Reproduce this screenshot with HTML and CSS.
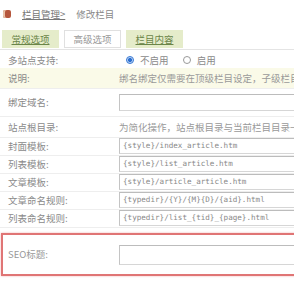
FILE: index.html
```html
<!DOCTYPE html>
<html lang="zh-CN">
<head>
  <meta charset="UTF-8" />
  <title>修改栏目</title>
  <link rel="stylesheet" href="styles.css">
</head>
<body>

  <!-- breadcrumb -->
  <div class="crumb">
    <span class="crumb-icon"></span>
    <a href="#">栏目管理&gt;</a>
    <span class="crumb-cur">修改栏目</span>
  </div>

  <!-- tabs -->
  <div class="tabs">
    <span class="tab">常规选项</span>
    <span class="tab active">高级选项</span>
    <span class="tab">栏目内容</span>
  </div>

  <table class="form">
    <colgroup>
      <col class="c-lbl">
      <col>
    </colgroup>
    <tr class="r-radio">
      <td class="lbl">多站点支持:</td>
      <td>
        <label class="radio"><span class="dot on"></span>不启用</label>
        <label class="radio"><span class="dot"></span>启用</label>
      </td>
    </tr>
    <tr class="r-note">
      <td class="lbl">说明:</td>
      <td class="note">绑名绑定仅需要在顶级栏目设定，子级栏目更改无效。</td>
    </tr>
    <tr class="r-domain">
      <td class="lbl">绑定域名:</td>
      <td><div class="inp"></div></td>
    </tr>
    <tr class="r-root">
      <td class="lbl">站点根目录:</td>
      <td class="note">为简化操作，站点根目录与当前栏目目录一致</td>
    </tr>
    <tr class="r-tpl">
      <td class="lbl">封面模板:</td>
      <td><div class="inp">{style}/index_article.htm</div></td>
    </tr>
    <tr class="r-tpl">
      <td class="lbl">列表模板:</td>
      <td><div class="inp">{style}/list_article.htm</div></td>
    </tr>
    <tr class="r-tpl">
      <td class="lbl">文章模板:</td>
      <td><div class="inp">{style}/article_article.htm</div></td>
    </tr>
    <tr class="r-tpl">
      <td class="lbl">文章命名规则:</td>
      <td><div class="inp">{typedir}/{Y}/{M}{D}/{aid}.html</div></td>
    </tr>
    <tr class="r-tpl">
      <td class="lbl">列表命名规则:</td>
      <td><div class="inp">{typedir}/list_{tid}_{page}.html</div></td>
    </tr>
  </table>

  <div class="seo">
    <span class="lbl">SEO标题:</span>
    <div class="inp"></div>
  </div>

</body>
</html>
```

FILE: styles.css
```css
* {
  box-sizing: border-box;
}

body {
  margin: 0;
  width: 294px;
  height: 294px;
  overflow: hidden;
  background: #fff;
  font-family: "Noto Sans CJK SC", "Liberation Serif", serif;
  font-size: 9.5px;
  color: #8a8a8a;
}

.crumb {
  height: 28px;
  display: flex;
  align-items: center;
  padding-left: 3px;
}

.crumb-icon {
  width: 8px;
  height: 8px;
  border-radius: 2px;
  background: #b5563c;
  box-shadow: inset 2px 0 0 #e8c2a8;
  margin-right: 11px;
}

.crumb a {
  color: #777;
  text-decoration: underline;
  margin-right: 11px;
}

.crumb-cur {
  color: #888;
}

.tabs {
  display: flex;
  gap: 4px;
  padding: 2px 0 0 2px;
  height: 22px;
  border-bottom: 1px solid #e4e4e4;
}

.tab {
  width: 57px;
  height: 18px;
  line-height: 18px;
  text-align: center;
  background: #e5ecca;
  color: #6a8548;
  text-decoration: underline;
}

.tab.active {
  background: #fff;
  border: 1px solid #e0e0e0;
  color: #999;
  text-decoration: none;
  line-height: 16px;
  margin-left: 1px;
}

.tab:last-child {
  margin-left: 1px;
}

.form {
  width: 320px;
  table-layout: fixed;
  border-collapse: collapse;
  margin-top: 2px;
}

.c-lbl {
  width: 119px;
}

.form td {
  padding: 0;
  border-bottom: 1px solid #eee;
}

.form .lbl {
  padding-left: 8px;
  white-space: nowrap;
}

.r-radio td {
  height: 16px;
  border-bottom: none;
}

.radio {
  display: inline-flex;
  align-items: center;
  margin-left: 7px;
  margin-right: 5px;
}

.dot {
  width: 8px;
  height: 8px;
  border-radius: 50%;
  border: 1px solid #999;
  background: #fff;
  margin-right: 6px;
}

.dot.on {
  border-color: #3a7bd5;
  background: radial-gradient(circle, #2c6fd0 40%, #bcd3f3 55%);
}

.r-note td {
  height: 20px;
  background: #fafae8;
}

.note {
  white-space: nowrap;
  overflow: hidden;
  color: #999;
}

.r-domain td {
  height: 28px;
}

.r-root td {
  height: 21px;
}

.r-tpl td {
  height: 18px;
}

.inp {
  height: 16px;
  border: 1px solid #d6d6d6;
  border-top-color: #bcbcbc;
  border-left-color: #c4c4c4;
  background: #fff;
  font-family: "DejaVu Sans Mono", "Liberation Mono", monospace;
  font-size: 7.6px;
  line-height: 14px;
  padding-left: 3px;
  color: #888;
  white-space: nowrap;
}

.r-domain .inp {
  height: 17px;
}

.seo {
  margin: 5px 0 0 1px;
  width: 310px;
  height: 43px;
  border: 2px solid #e07575;
  box-shadow: 0 0 2px #f2b4b4;
  display: flex;
  align-items: center;
}

.seo .lbl {
  width: 116px;
  padding-left: 5px;
  color: #999;
}

.seo .inp {
  flex: 1;
  height: 20px;
  margin-top: 2px;
}
```
